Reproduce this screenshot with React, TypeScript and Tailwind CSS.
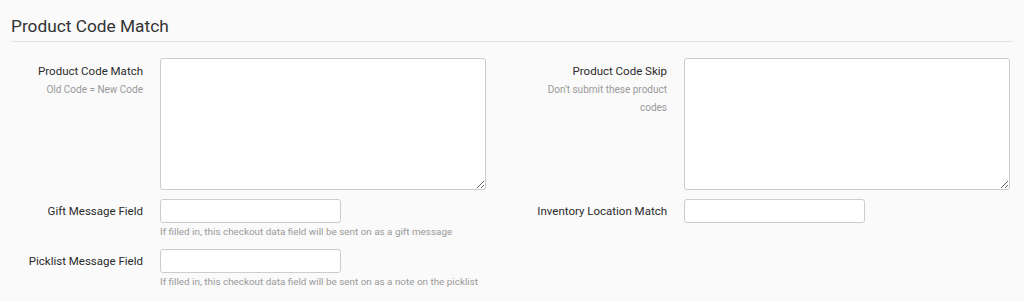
export default function App() {
  return (
    <div className="min-h-[301px] bg-[#fafafa] font-['Roboto',sans-serif] text-[#2b2b2b]">
      <div className="px-[11px] pt-[14px]">
        <h2 className="text-[17.3px] leading-[24px] text-[#333]">Product Code Match</h2>
        <div className="mt-[3px] h-px bg-[#e3e3e3]" />

        <div className="mt-[16px] grid grid-cols-[524px_1fr]">
          {/* left column */}
          <div className="flex flex-col">
            <div className="flex gap-[17px]">
              <div className="w-[132px] pt-[5px] text-right">
                <p className="text-[11.5px] leading-[16px]">Product Code Match</p>
                <p className="mt-[2px] text-[10px] leading-[18px] text-[#999]">Old Code = New Code</p>
              </div>
              <textarea className="h-[132px] w-[326px] resize rounded-[3px] border border-[#ccc] bg-white" />
            </div>

            <div className="mt-[9px] flex gap-[17px]">
              <label className="w-[132px] pt-[4px] text-right text-[11.5px] leading-[16px]">Gift Message Field</label>
              <div>
                <input className="h-[24px] w-[181px] rounded-[3px] border border-[#ccc] bg-white" />
                <p className="mt-[2px] text-[9.9px] leading-[14px] text-[#999]">
                  If filled in, this checkout data field will be sent on as a gift message
                </p>
              </div>
            </div>

            <div className="mt-[10px] flex gap-[17px]">
              <label className="w-[132px] pt-[4px] text-right text-[11.5px] leading-[16px]">Picklist Message Field</label>
              <div>
                <input className="h-[24px] w-[181px] rounded-[3px] border border-[#ccc] bg-white" />
                <p className="mt-[2px] text-[9.9px] leading-[14px] text-[#999]">
                  If filled in, this checkout data field will be sent on as a note on the picklist
                </p>
              </div>
            </div>
          </div>

          {/* right column */}
          <div className="flex flex-col">
            <div className="flex gap-[17px]">
              <div className="w-[132px] pt-[5px] text-right">
                <p className="text-[11.5px] leading-[16px]">Product Code Skip</p>
                <p className="mt-[2px] pl-[8px] text-[10px] leading-[18px] text-[#999]">Don't submit these product codes</p>
              </div>
              <textarea className="h-[132px] w-[326px] resize rounded-[3px] border border-[#ccc] bg-white" />
            </div>

            <div className="mt-[9px] flex gap-[17px]">
              <label className="w-[132px] whitespace-nowrap pt-[4px] text-right text-[11.5px] leading-[16px]">
                Inventory Location Match
              </label>
              <input className="h-[24px] w-[181px] rounded-[3px] border border-[#ccc] bg-white" />
            </div>
          </div>
        </div>
      </div>
    </div>
  )
}
